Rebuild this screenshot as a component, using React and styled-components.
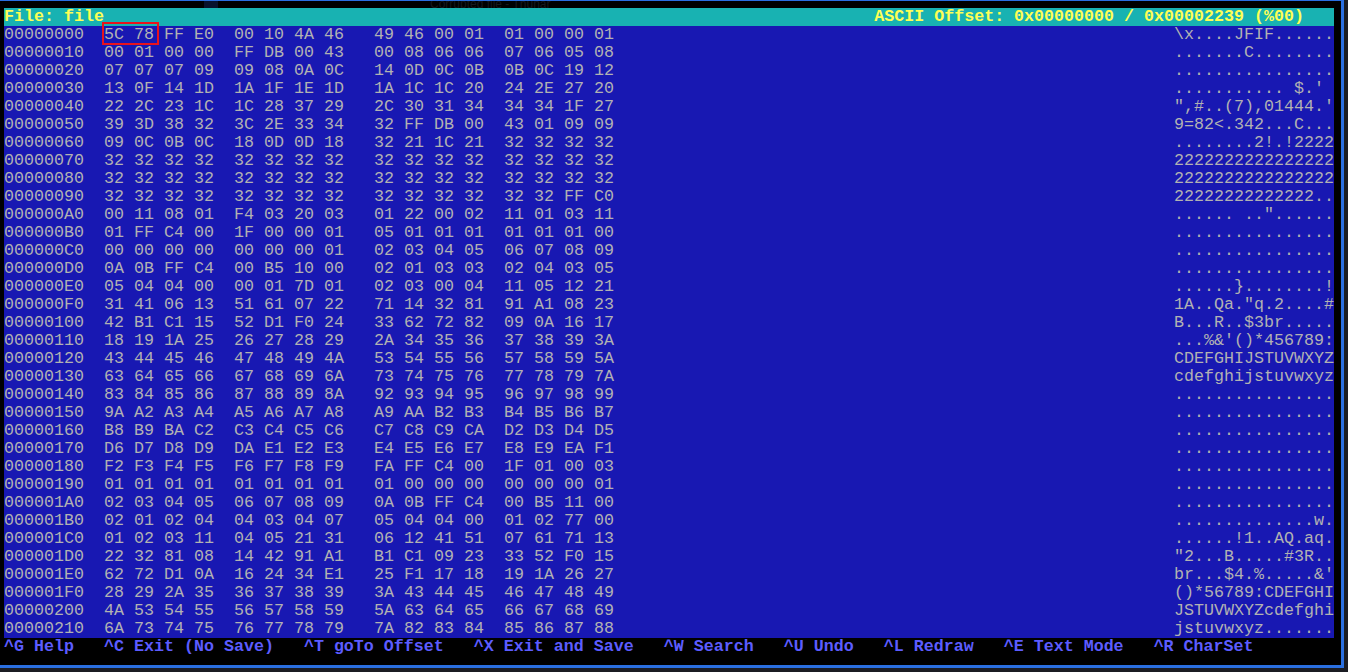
import styled, { createGlobalStyle } from "styled-components"

const GlobalStyle = createGlobalStyle`
    html, body {
        margin: 0;
        padding: 0;
        height: 100%;
        background: #1b1c22;
        overflow: hidden;
    }
`

const dump = [
    "5C 78 FF E0 00 10 4A 46 49 46 00 01 01 00 00 01",
    "00 01 00 00 FF DB 00 43 00 08 06 06 07 06 05 08",
    "07 07 07 09 09 08 0A 0C 14 0D 0C 0B 0B 0C 19 12",
    "13 0F 14 1D 1A 1F 1E 1D 1A 1C 1C 20 24 2E 27 20",
    "22 2C 23 1C 1C 28 37 29 2C 30 31 34 34 34 1F 27",
    "39 3D 38 32 3C 2E 33 34 32 FF DB 00 43 01 09 09",
    "09 0C 0B 0C 18 0D 0D 18 32 21 1C 21 32 32 32 32",
    "32 32 32 32 32 32 32 32 32 32 32 32 32 32 32 32",
    "32 32 32 32 32 32 32 32 32 32 32 32 32 32 32 32",
    "32 32 32 32 32 32 32 32 32 32 32 32 32 32 FF C0",
    "00 11 08 01 F4 03 20 03 01 22 00 02 11 01 03 11",
    "01 FF C4 00 1F 00 00 01 05 01 01 01 01 01 01 00",
    "00 00 00 00 00 00 00 01 02 03 04 05 06 07 08 09",
    "0A 0B FF C4 00 B5 10 00 02 01 03 03 02 04 03 05",
    "05 04 04 00 00 01 7D 01 02 03 00 04 11 05 12 21",
    "31 41 06 13 51 61 07 22 71 14 32 81 91 A1 08 23",
    "42 B1 C1 15 52 D1 F0 24 33 62 72 82 09 0A 16 17",
    "18 19 1A 25 26 27 28 29 2A 34 35 36 37 38 39 3A",
    "43 44 45 46 47 48 49 4A 53 54 55 56 57 58 59 5A",
    "63 64 65 66 67 68 69 6A 73 74 75 76 77 78 79 7A",
    "83 84 85 86 87 88 89 8A 92 93 94 95 96 97 98 99",
    "9A A2 A3 A4 A5 A6 A7 A8 A9 AA B2 B3 B4 B5 B6 B7",
    "B8 B9 BA C2 C3 C4 C5 C6 C7 C8 C9 CA D2 D3 D4 D5",
    "D6 D7 D8 D9 DA E1 E2 E3 E4 E5 E6 E7 E8 E9 EA F1",
    "F2 F3 F4 F5 F6 F7 F8 F9 FA FF C4 00 1F 01 00 03",
    "01 01 01 01 01 01 01 01 01 00 00 00 00 00 00 01",
    "02 03 04 05 06 07 08 09 0A 0B FF C4 00 B5 11 00",
    "02 01 02 04 04 03 04 07 05 04 04 00 01 02 77 00",
    "01 02 03 11 04 05 21 31 06 12 41 51 07 61 71 13",
    "22 32 81 08 14 42 91 A1 B1 C1 09 23 33 52 F0 15",
    "62 72 D1 0A 16 24 34 E1 25 F1 17 18 19 1A 26 27",
    "28 29 2A 35 36 37 38 39 3A 43 44 45 46 47 48 49",
    "4A 53 54 55 56 57 58 59 5A 63 64 65 66 67 68 69",
    "6A 73 74 75 76 77 78 79 7A 82 83 84 85 86 87 88",
]

const shortcuts = [
    "^G Help",
    "^C Exit (No Save)",
    "^T goTo Offset",
    "^X Exit and Save",
    "^W Search",
    "^U Undo",
    "^L Redraw",
    "^E Text Mode",
    "^R CharSet",
]

function toAscii(bytes) {
    return bytes
        .map((b) => {
            const code = parseInt(b, 16)
            return code >= 32 && code < 127 ? String.fromCharCode(code) : "."
        })
        .join("")
}

function Row({ line, index }) {
    const bytes = line.split(" ")
    const groups = [bytes.slice(0, 4), bytes.slice(4, 8), bytes.slice(8, 12), bytes.slice(12)]
    return (
        <HexRow>
            <Offset>{(index * 16).toString(16).toUpperCase().padStart(8, "0")}</Offset>
            <Hex>
                {groups.map((g, i) => (
                    <Group key={i}>{g.join(" ")}</Group>
                ))}
            </Hex>
            <Ascii>{toAscii(bytes)}</Ascii>
            {index === 0 && <Marker />}
        </HexRow>
    )
}

export default function App() {
    return (
        <Desktop>
            <GlobalStyle />
            <Terminal>
                <BehindIcon />
                <BehindTitle>Corrupted file - Thunar</BehindTitle>
                <Header>
                    <span>File: file</span>
                    <span>ASCII Offset: 0x00000000 / 0x00002239 (%00)</span>
                </Header>
                <Dump>
                    {dump.map((line, i) => (
                        <Row key={i} line={line} index={i} />
                    ))}
                </Dump>
                <Footer>
                    {shortcuts.map((s) => (
                        <span key={s}>{s}</span>
                    ))}
                </Footer>
            </Terminal>
        </Desktop>
    )
}

const Desktop = styled.div`
    width: 1348px;
    height: 672px;
`

const Terminal = styled.div`
    position: relative;
    box-sizing: border-box;
    width: 1344px;
    height: 668px;
    padding: 8px 0 0 4px;
    background: #000;
    border-top: 1px solid #2a6fe0;
    border-right: 3px solid #2a6fe0;
    border-bottom: 3px solid #2a6fe0;
    font-family: "Liberation Mono", monospace;
    font-size: 16.67px;
    line-height: 18px;
    white-space: pre;
    overflow: hidden;
`

const BehindTitle = styled.div`
    position: absolute;
    top: -3px;
    left: 430px;
    color: #17181d;
    font-family: "Liberation Sans", sans-serif;
    font-size: 12px;
    line-height: 12px;
`

const BehindIcon = styled.div`
    position: absolute;
    top: 0;
    left: 204px;
    width: 14px;
    height: 7px;
    background: #08122c;
`

const Header = styled.div`
    position: relative;
    display: flex;
    justify-content: space-between;
    width: 1330px;
    height: 18px;
    margin-top: -1px;
    padding-right: 30px;
    box-sizing: border-box;
    background: #18b2b2;
    color: #ffff55;
    font-weight: bold;
`

const Dump = styled.div`
    width: 1330px;
    background: #1818b2;
    color: #b2b2b2;
`

const HexRow = styled.div`
    position: relative;
    display: flex;
    height: 18px;
`

const Offset = styled.span`
    width: 100px;
`

const Hex = styled.span`
    display: flex;
    width: 1070px;
`

const Group = styled.span`
    width: 130px;
    &:nth-child(2) {
        width: 140px;
    }
`

const Ascii = styled.span`
    width: 160px;
`

const Marker = styled.div`
    position: absolute;
    top: -4px;
    left: 98px;
    width: 57px;
    height: 23px;
    box-sizing: border-box;
    border: 2px solid #e8121c;
`

const Footer = styled.div`
    display: flex;
    gap: 30px;
    height: 18px;
    color: #5c5cff;
    font-weight: bold;
`
